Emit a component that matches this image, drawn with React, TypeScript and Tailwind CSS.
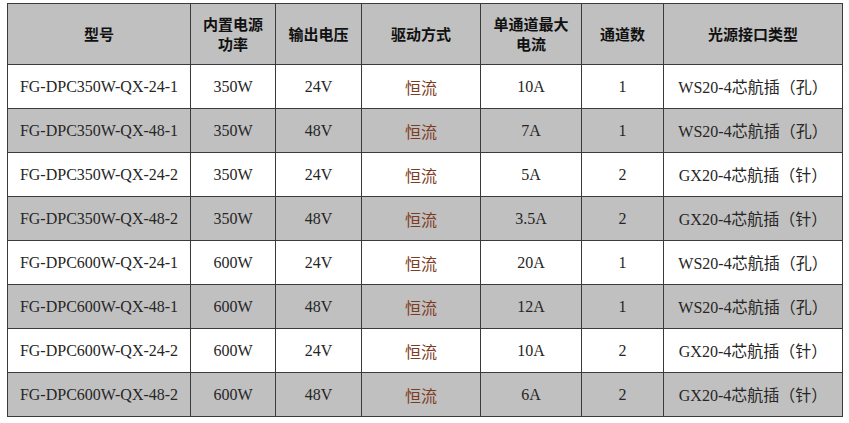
import React from "react";

const rows = [
  ["FG-DPC350W-QX-24-1", "350W", "24V", "10A", "1", "WS20-4", "芯航插（孔）"],
  ["FG-DPC350W-QX-48-1", "350W", "48V", "7A", "1", "WS20-4", "芯航插（孔）"],
  ["FG-DPC350W-QX-24-2", "350W", "24V", "5A", "2", "GX20-4", "芯航插（针）"],
  ["FG-DPC350W-QX-48-2", "350W", "48V", "3.5A", "2", "GX20-4", "芯航插（针）"],
  ["FG-DPC600W-QX-24-1", "600W", "24V", "20A", "1", "WS20-4", "芯航插（孔）"],
  ["FG-DPC600W-QX-48-1", "600W", "48V", "12A", "1", "WS20-4", "芯航插（孔）"],
  ["FG-DPC600W-QX-24-2", "600W", "24V", "10A", "2", "GX20-4", "芯航插（针）"],
  ["FG-DPC600W-QX-48-2", "600W", "48V", "6A", "2", "GX20-4", "芯航插（针）"],
];

const serif = { fontFamily: '"Liberation Serif", "Noto Sans CJK SC", serif' };
const cjk = { fontFamily: '"Noto Sans CJK SC", sans-serif' };

export default function App() {
  const th = "border border-[#3a3a3a] text-center align-middle font-bold text-[15px] leading-[20px] text-[#111]";
  const td = "border border-[#3a3a3a] text-center align-middle text-[16px] text-[#262626]";
  return (
    <div className="w-[849px] h-[423px] bg-white pl-[7px] pt-[3px]">
      <table className="border-collapse table-fixed w-[835px]" style={cjk}>
        <colgroup>
          <col className="w-[183px]" />
          <col className="w-[85px]" />
          <col className="w-[86px]" />
          <col className="w-[119px]" />
          <col className="w-[101px]" />
          <col className="w-[82px]" />
          <col className="w-[179px]" />
        </colgroup>
        <thead>
          <tr className="h-[61px] bg-[#c0c0c0]">
            <th className={th}>型号</th>
            <th className={th}>内置电源<br />功率</th>
            <th className={th}>输出电压</th>
            <th className={th}>驱动方式</th>
            <th className={th}>单通道最大<br />电流</th>
            <th className={th}>通道数</th>
            <th className={th}>光源接口类型</th>
          </tr>
        </thead>
        <tbody>
          {rows.map((r, i) => (
            <tr key={i} className={i % 2 === 0 ? "h-[44px] bg-white" : "h-[44px] bg-[#c0c0c0]"}>
              <td className={td} style={serif}>{r[0]}</td>
              <td className={td} style={serif}>{r[1]}</td>
              <td className={td} style={serif}>{r[2]}</td>
              <td className={td}><span className="text-[#7e3c1e]" style={cjk}>恒流</span></td>
              <td className={td} style={serif}>{r[3]}</td>
              <td className={td} style={serif}>{r[4]}</td>
              <td className={td}>
                <span style={serif}>{r[5]}</span>
                <span style={cjk}>{r[6]}</span>
              </td>
            </tr>
          ))}
        </tbody>
      </table>
    </div>
  );
}
